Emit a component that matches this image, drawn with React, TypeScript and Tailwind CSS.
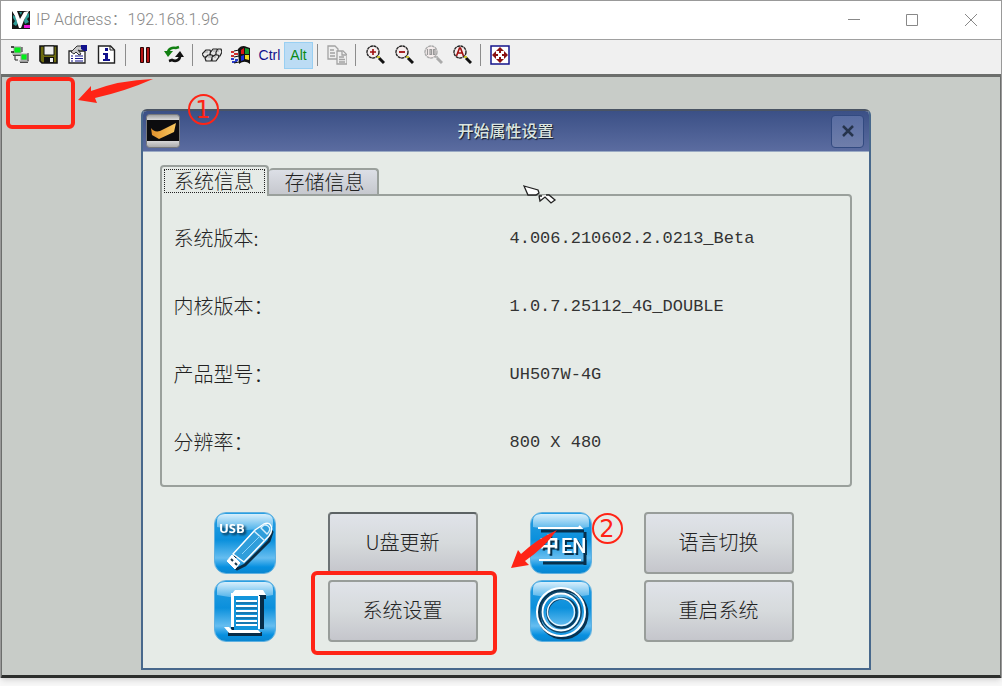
import React from 'react';

type IconProps = { children: React.ReactNode };

const ToolIcon = ({ children }: IconProps) => (
  <svg className="h-5 w-5" viewBox="0 0 20 20" fill="none" aria-hidden="true">
    {children}
  </svg>
);

interface ToolButtonProps {
  label: string;
  children: React.ReactNode;
  className?: string;
}

const ToolButton = ({ label, children, className = '' }: ToolButtonProps) => (
  <button
    type="button"
    aria-label={label}
    className={`flex h-[27px] w-[29px] shrink-0 items-center justify-center ${className}`}
  >
    {children}
  </button>
);

const Separator = () => (
  <div className="flex w-[9px] shrink-0 justify-center">
    <div className="h-[22px] w-px bg-[#8c8c8c]" />
  </div>
);

const ConnectIcon = () => (
  <ToolIcon>
    <path d="M4 2h7v6H4z" fill="#00f018" stroke="#999" />
    <path d="M1 2h3M1 7h3M3 10h8M10 17h8" stroke="#111" strokeWidth="1.4" />
    <path d="M2 9h9M9 16h10" stroke="#b5b5b5" strokeWidth="1.5" />
    <path d="M11 9h6v6h-6z" fill="#00f018" stroke="#999" />
    <path d="M5 11v4h3M18 8v8M12 2v5" stroke="#222" />
  </ToolIcon>
);

const SaveIcon = () => (
  <ToolIcon>
    <path d="M1 1h17v17H3l-2-2z" fill="#6e6c10" stroke="#111" strokeWidth="1.600" />
    <path d="M5 1h10v9H5z" fill="#efefef" stroke="#111" />
    <path d="M5 12h10v6H5z" fill="#111" />
    <path d="M11 13h3v4h-3z" fill="#eee" />
  </ToolIcon>
);

const PropertiesIcon = () => (
  <ToolIcon>
    <path d="M1 6h16v12H1z" fill="#fff" stroke="#222" strokeWidth="1.300" />
    <path d="M3 11h2M7 11h8M3 13.500h2M7 13.500h8M3 16h2M7 16h8" stroke="#15158a" strokeWidth="1.200" />
    <path d="M3 7l6-6 5 0 3 3-4 2-3-1 3 4-2 1-3-3-2 2z" fill="#c9c9c9" stroke="#333" />
    <path d="M13 0h6v6h-3l-3-2z" fill="#10108c" />
  </ToolIcon>
);

const InfoIcon = () => (
  <ToolIcon>
    <path d="M1.500 1h12l4 4v13h-16z" fill="#fff" stroke="#222" strokeWidth="1.400" />
    <path d="M13 1v4h4" stroke="#222" />
    <path d="M8 3h3v3H8zM6 8h5v6h2v2H6v-2h2v-4H6z" fill="#10108c" />
  </ToolIcon>
);

const PauseIcon = () => (
  <ToolIcon>
    <path d="M5.500 2.500h3v15h-3zM11.500 2.500h3v15h-3z" fill="#b81414" stroke="#2a0505" />
  </ToolIcon>
);

const RefreshIcon = () => (
  <ToolIcon>
    <path d="M4 8c0-4 4-6 8-5l3-1" stroke="#128012" strokeWidth="2.600" />
    <path d="M0 6h9l-5 6z" fill="#128012" />
    <path d="M16 11c0 4-4 6-8 4l-3 1" stroke="#111" strokeWidth="2.600" />
    <path d="M11 12l5-6 4 6z" fill="#111" />
  </ToolIcon>
);

const KeysIcon = () => (
  <ToolIcon>
    <g fill="#e6e6e6" stroke="#222" strokeWidth="1.200" strokeLinejoin="round">
      <path d="M0 9l4-4h4l1 3-3 4H2z" />
      <path d="M8 8l3-4h4l1 3-3 4H9z" />
      <path d="M14 7l2-3h3l1 3-2 4h-4z" />
      <path d="M3 13l3-3h4l1 2-2 4H4z" />
      <path d="M10 12l3-2h3l1 2-3 4h-4z" />
    </g>
    <path d="M3 7h3M11 6h3M15 6h2M6 12h3M12 12h2" stroke="#999" />
  </ToolIcon>
);

const WindowsIcon = () => (
  <ToolIcon>
    <path d="M7 4c4-4 6-3 9-2l3 1v16c-4-3-7-3-11 0z" fill="#111" />
    <path d="M10 5l3-2v6h-3z" fill="#d81414" />
    <path d="M14 3l4 1v5h-4z" fill="#12952c" />
    <path d="M10 11l3-1v5l-3 1z" fill="#1a2ed8" />
    <path d="M14 10h4v5l-4-1z" fill="#ecd820" />
    <path d="M0 7h3M3 9h4M0 11h3" stroke="#d03030" strokeWidth="2" />
    <path d="M0 14h3M4 15h3M1 17h5" stroke="#2b3dc8" strokeWidth="2" />
    <path d="M3 6l5-1M3 12l5-1M3 18l5-1" stroke="#111" />
  </ToolIcon>
);

const CopyIcon = () => (
  <ToolIcon>
    <g fill="#efefef" stroke="#a3a3a3" strokeWidth="1.300">
      <path d="M1 1h7l3 3v10H1z" />
      <path d="M3 5h4M3 8h5M3 11h5" />
      <path d="M10 6h6l4 4v9H10z" />
      <path d="M15 6v4h4M12 12h5M12 14.500h6M12 17h6" />
    </g>
  </ToolIcon>
);

interface ZoomIconProps {
  color?: string;
  handle?: string;
  children: React.ReactNode;
}

const ZoomIcon = ({ color = '#222', handle = '#111', children }: ZoomIconProps) => (
  <ToolIcon>
    <circle cx="8" cy="7" r="6" fill="#f6eeee" stroke={color} strokeWidth="1.400" strokeDasharray="3 .5" />
    <path d="M14 13l5 5" stroke={handle} strokeWidth="3" />
    <path d="M12 12l3 0" stroke={color === '#222' ? '#c8c000' : color} strokeWidth="1.500" />
    {children}
  </ToolIcon>
);

const FullscreenIcon = () => (
  <ToolIcon>
    <path d="M1 1h18v18H1z" fill="#fff" stroke="#14148c" strokeWidth="1.500" />
    <path
      d="M10 2l4 4h-3v2H9V6H6zM10 18l4-4h-3v-2H9v2H6zM2 10l4-4v3h2v2H6v3zM18 10l-4-4v3h-2v2h2v3z"
      fill="#8c1010"
    />
  </ToolIcon>
);

const AppLogo = () => (
  <svg className="h-[18px] w-[18px]" viewBox="0 0 18 18" aria-hidden="true">
    <path d="M0 0h18v18H0z" fill="#151515" />
    <path d="M1 4l3 2v3l2 3-2 3-3-2 2-3-2-3zM14 4l3-2v4l-2 2 2 3-4 2-1-3zM7 1h3l-1 3z" fill="#2c9a94" />
    <path d="M0 0h5l3 8 4-7 5-1-5 9-3 8H7L3 5z" fill="#fff" />
    <path d="M12 14h6v3h-6z" fill="#e815d8" />
  </svg>
);

const DialogLogo = () => (
  <svg className="h-[34px] w-[34px]" viewBox="0 0 34 34" aria-hidden="true">
    <defs>
      <linearGradient id="logoFrame" x1="0" y1="0" x2="0" y2="1">
        <stop offset="0" stopColor="#9a9c9e" />
        <stop offset=".2" stopColor="#e6e6e6" />
        <stop offset=".8" stopColor="#d8d8d8" />
        <stop offset="1" stopColor="#a8a8a8" />
      </linearGradient>
      <linearGradient id="logoMark" x1="0" y1="0" x2="1" y2="0">
        <stop offset="0" stopColor="#e0902c" />
        <stop offset="1" stopColor="#f8c860" />
      </linearGradient>
    </defs>
    <rect x=".5" y=".5" width="33" height="33" rx="3" fill="url(#logoFrame)" stroke="#77797c" />
    <path d="M1 6h32v21H1z" fill="#0c0c0e" />
    <path d="M5 14c2 3 5 4 9 3l16-8-2 9-15 7-7-4z" fill="url(#logoMark)" />
  </svg>
);

const Tile = ({ children }: { children: React.ReactNode }) => (
  <div className="h-[62px] w-[62px] overflow-hidden rounded-xl border border-[#5fb0e0]">
    <svg className="h-full w-full" viewBox="0 0 60 60" fill="none" aria-hidden="true">
      <defs>
        <linearGradient id="tileFill" x1="0" y1="0" x2="0" y2="1">
          <stop offset="0" stopColor="#2a9fe2" />
          <stop offset=".45" stopColor="#0b90dc" />
          <stop offset=".75" stopColor="#66bdf0" />
          <stop offset=".9" stopColor="#0790e0" />
          <stop offset="1" stopColor="#0a86d0" />
        </linearGradient>
        <linearGradient id="tileGloss" x1="0" y1="0" x2="0" y2="1">
          <stop offset="0" stopColor="#d8effc" />
          <stop offset="1" stopColor="#4eb2ea" />
        </linearGradient>
      </defs>
      <path d="M0 0h60v60H0z" fill="url(#tileFill)" />
      <path d="M2 8Q2 1 10 1h40q8 0 8 7v6Q30 20 2 14z" fill="url(#tileGloss)" />
      {children}
    </svg>
  </div>
);

const UsbTile = () => (
  <Tile>
    <g strokeLinejoin="round">
      <path d="M20 44l22-25 10-5 5 5-3 9-24 24-8 4-8-8z" stroke="#0a2c44" strokeWidth="3" />
      <path d="M18 41l22-24 9-6q5-2 7 2t-2 10L29 49z" fill="#2f9edb" stroke="#fff" strokeWidth="1.500" />
      <path d="M39 18l11 10M46 15q3-5 7-2t-1 8z" stroke="#d4eefc" strokeWidth="1.500" />
      <path d="M27 41l18-18" stroke="#8cd2f8" />
      <path d="M17 42l8 8-5 6-8-8z" fill="#fff" stroke="#fff" />
      <path d="M16 46l2 2M20 50l2 2" stroke="#16374a" strokeWidth="2" />
    </g>
    <text
      x="4"
      y="20"
      fill="#fff"
      className="font-['Open_Sans',sans-serif] text-[13px] font-bold drop-shadow-[2px_2px_1px_#06304c]"
    >
      USB
    </text>
  </Tile>
);

const ScrollTile = () => (
  <Tile>
    <path d="M18 14v35M47 17v31M13 53h34M20 16h31" stroke="#062c48" strokeWidth="4" />
    <path d="M19 14h24v35H19z" fill="#1295dc" />
    <path d="M16 12h28v3H19v31h-3zM43 15h2v33h-2z" fill="#fff" />
    <path d="M20 9h28l3 5H16zM9 46h5l3 3h26l3 3H14z" fill="#fff" />
    <path d="M21 20h21M21 25h21M21 30h21M21 35h21M21 40h21M21 44h21" stroke="#fff" strokeWidth="1.800" />
    <path d="M21 22h21M21 27h21M21 32h21M21 37h21M21 42h21" stroke="#1a5e8a" />
  </Tile>
);

const LanguageTile = () => (
  <Tile>
    <path d="M10 18h43M12 50h41M54 19v33" stroke="#07304c" strokeWidth="3" />
    <path d="M7 15h43l-2-2M8 47h42" stroke="#fff" strokeWidth="2" />
    <g fill="#fff" className="drop-shadow-[2px_2px_0_#06304c]">
      <text x="8" y="39" className="font-['Noto_Sans_CJK_SC',sans-serif] text-xl font-bold">中</text>
      <text x="30" y="40" className="font-['Roboto',sans-serif] text-xl font-medium">EN</text>
    </g>
  </Tile>
);

const RingTile = () => (
  <Tile>
    <circle cx="32" cy="33" r="24" stroke="#073352" strokeWidth="3" />
    <circle cx="30" cy="31" r="24" stroke="#fff" strokeWidth="2" />
    <circle cx="30" cy="31" r="20" stroke="#0e4b72" strokeWidth="2" />
    <circle cx="30" cy="31" r="18.500" stroke="#fff" strokeWidth="1.800" />
    <circle cx="31" cy="32" r="14.500" stroke="#073c60" strokeWidth="2.500" />
    <circle cx="30" cy="31" r="13.500" stroke="#e4f5ff" strokeWidth="1.500" />
  </Tile>
);

interface ActionButtonProps {
  label: string;
  focused?: boolean;
}

const ActionButton = ({ label, focused = false }: ActionButtonProps) => (
  <button
    type="button"
    className={`h-[62px] w-[150px] rounded-sm border-2 bg-linear-to-b from-[#e0e3e9] via-[#d6dadc] to-[#c5c6cc] pb-[2px] ${
      focused ? 'border-[#8b908e] border-t-[#5c6264] border-l-[#6c7274]' : 'border-[#989d9a]'
    }`}
  >
    {label}
  </button>
);

const systemInfo = [
  { label: '系统版本:', value: '4.006.210602.2.0213_Beta' },
  { label: '内核版本：', value: '1.0.7.25112_4G_DOUBLE' },
  { label: '产品型号：', value: 'UH507W-4G' },
  { label: '分辨率：', value: '800 X 480' },
];

const TitleBar = () => (
  <header className="flex h-[38px] items-center bg-white pl-[11px]">
    <AppLogo />
    <h1 className="ml-[6px] flex-1 font-['Roboto','Noto_Sans_CJK_SC',sans-serif] text-base font-light text-[#888]">
      IP Address：192.168.1.96
    </h1>
    <button type="button" aria-label="Minimize" className="flex h-full w-[58px] items-center justify-center">
      <svg className="h-3 w-3" viewBox="0 0 12 12" stroke="#888" fill="none"><path d="M0 5.500h12" /></svg>
    </button>
    <button type="button" aria-label="Maximize" className="flex h-full w-[58px] items-center justify-center">
      <svg className="h-3 w-3" viewBox="0 0 12 12" stroke="#888" fill="none"><path d="M.5.500h11v11H.5z" /></svg>
    </button>
    <button type="button" aria-label="Close" className="flex h-full w-[60px] items-center justify-center">
      <svg className="h-3 w-3" viewBox="0 0 12 12" stroke="#888" fill="none"><path d="M0 0l12 12M12 0L0 12" /></svg>
    </button>
  </header>
);

const Toolbar = () => (
  <div
    role="toolbar"
    className="flex h-[35px] items-center border-t border-[#a0a0a0] bg-[#f0f0f0] pb-1 pl-1 font-['Liberation_Sans',sans-serif] text-sm"
  >
    <ToolButton label="Connect"><ConnectIcon /></ToolButton>
    <ToolButton label="Save"><SaveIcon /></ToolButton>
    <ToolButton label="Properties"><PropertiesIcon /></ToolButton>
    <ToolButton label="Info"><InfoIcon /></ToolButton>
    <Separator />
    <ToolButton label="Pause"><PauseIcon /></ToolButton>
    <ToolButton label="Refresh"><RefreshIcon /></ToolButton>
    <Separator />
    <ToolButton label="Send keys"><KeysIcon /></ToolButton>
    <ToolButton label="Start menu"><WindowsIcon /></ToolButton>
    <ToolButton label="Ctrl" className="text-[#10108c]">Ctrl</ToolButton>
    <ToolButton label="Alt" className="border border-[#99cff2] bg-[#bcdcf4] text-[#0a8a14]">Alt</ToolButton>
    <Separator />
    <ToolButton label="Copy"><CopyIcon /></ToolButton>
    <Separator />
    <ToolButton label="Zoom in">
      <ZoomIcon><path d="M5 7h6M8 4v6" stroke="#a01010" strokeWidth="1.600" /></ZoomIcon>
    </ToolButton>
    <ToolButton label="Zoom out">
      <ZoomIcon><path d="M5 7h6" stroke="#a01010" strokeWidth="1.800" /></ZoomIcon>
    </ToolButton>
    <ToolButton label="Zoom 100%">
      <ZoomIcon color="#aaa" handle="#aaa">
        <path d="M4.500 4v6M7 4.500h1.500v5H7zM10.500 4.500H12v5h-1.500z" stroke="#999" strokeWidth="1.200" />
      </ZoomIcon>
    </ToolButton>
    <ToolButton label="Auto zoom">
      <ZoomIcon><path d="M4.500 11l3-8h1l3 8M6 8h4" stroke="#a01010" strokeWidth="1.600" /></ZoomIcon>
    </ToolButton>
    <Separator />
    <ToolButton label="Full screen"><FullscreenIcon /></ToolButton>
  </div>
);

interface StepMarkProps {
  value: string;
  className: string;
}

const StepMark = ({ value, className }: StepMarkProps) => (
  <span
    className={`absolute flex h-[31px] w-[31px] items-center justify-center rounded-full border-2 border-[#ff2416] font-['DejaVu_Sans',sans-serif] text-2xl leading-none font-normal text-[#ff2416] ${className}`}
  >
    {value}
  </span>
);

const SettingsDialog = () => (
  <section
    role="dialog"
    aria-labelledby="dialog-title"
    className="relative mt-8 w-full max-w-[730px] shrink-0 self-start rounded-t-md border-2 border-[#48688c] border-t-[#4a5464] bg-[#e6ebe7] pb-[26px]"
  >
    <header className="flex h-[41px] items-center justify-between rounded-t-sm border-b border-[#9aaac4] bg-linear-to-b from-[#3b5086] to-[#5b6ca0] pr-1 pl-[3px]">
      <DialogLogo />
      <h2
        id="dialog-title"
        className="pb-[3px] font-['Noto_Sans_CJK_SC',sans-serif] text-base font-medium text-[#dce6e0] text-shadow-[1px_1px_1px_#101828]"
      >
        开始属性设置
      </h2>
      <button
        type="button"
        aria-label="关闭"
        className="flex h-[33px] w-[33px] items-center justify-center rounded-sm border border-[#324a80] bg-linear-to-b from-[#596da2] to-[#6f7eaa]"
      >
        <svg className="h-3 w-3" viewBox="0 0 12 12" stroke="#26344c" strokeWidth="2.500"><path d="M1 1l10 10M11 1L1 11" /></svg>
      </button>
    </header>

    <div className="px-[17px] pt-[13px]">
      <div role="tablist" className="flex items-end">
        <button
          type="button"
          role="tab"
          aria-selected="true"
          className="relative z-10 -mb-[2px] h-[31px] w-[109px] rounded-t-sm border-2 border-b-0 border-[#9aa09c] bg-[#e6ebe7] px-[2px] pb-[2px]"
        >
          <span className="block h-6 border border-dotted border-[#222] leading-[22px]">系统信息</span>
        </button>
        <button
          type="button"
          role="tab"
          aria-selected="false"
          className="h-[26px] w-[110px] rounded-t-sm border-2 border-b-0 border-l-0 border-[#9aa09c] bg-linear-to-b from-[#dcdfe6] to-[#c6c8ce] pl-1 leading-5"
        >
          存储信息
        </button>
      </div>
      <div role="tabpanel" className="rounded-b-sm rounded-tr-sm border-2 border-[#9aa09c] pt-2 pb-[9px] pl-3">
        <table className="w-full">
          <tbody>
            {systemInfo.map((row) => (
              <tr key={row.label} className="h-[68px]">
                <th scope="row" className="w-[336px] text-left font-light">{row.label}</th>
                <td className="pt-[2px] font-['Liberation_Mono',monospace] text-[17px] text-[#333]">{row.value}</td>
              </tr>
            ))}
          </tbody>
        </table>
      </div>

      <div className="mt-[25px] flex justify-center pr-1">
        <div className="grid grid-cols-[62px_150px_62px_150px] gap-x-[52px] gap-y-[6px]">
          <UsbTile />
          <ActionButton label="U盘更新" focused />
          <LanguageTile />
          <ActionButton label="语言切换" />
          <ScrollTile />
          <ActionButton label="系统设置" />
          <RingTile />
          <ActionButton label="重启系统" />
        </div>
      </div>
    </div>

    {/* Remote mouse pointer */}
    <svg className="absolute top-[73px] left-[380px] h-[22px] w-[34px]" viewBox="0 0 34 22" aria-hidden="true">
      <path d="M1 2l14 4 1 3-3 2H5z" fill="#fff" stroke="#222" strokeWidth="1.300" />
      <path d="M16 12l1 5 5-4 6 6 4-3-6-5h-3M16 12h3" fill="#fff" stroke="#222" strokeWidth="1.300" />
    </svg>

    {/* Step 1 */}
    <StepMark value="1" className="-top-[17px] left-[45px]" />

    {/* Step 2 */}
    <div className="absolute top-[460px] left-[168px] h-[84px] w-[186px] rounded-md border-4 border-[#ff2416]" />
    <svg className="absolute top-[418px] left-[368px] h-[42px] w-[48px]" viewBox="0 0 48 42" aria-hidden="true">
      <path d="M0 39L7 21l3 4Q26 10 46 1 33 19 14 32l4 4z" fill="#ff2416" />
    </svg>
    <StepMark value="2" className="top-[402px] left-[449px]" />
  </section>
);

export default function App() {
  return (
    <div className="flex min-h-screen flex-col bg-[#f8f8f8] pb-[9px]">
      <div className="flex flex-1 flex-col border border-b-0 border-[#999] shadow-md">
        <TitleBar />
        <Toolbar />
        <main className="relative flex flex-1 justify-center border-t-3 border-r border-b-3 border-l border-[#6c6e6c] border-b-[#2c2e2c] bg-[#c8ccc8] pb-[5px] pl-[9px] font-['Noto_Sans_CJK_SC',sans-serif] text-xl font-light text-[#222]">
          <SettingsDialog />

          {/* Step 1 */}
          <div className="absolute top-0 left-1 h-[52px] w-[69px] rounded-md border-4 border-[#ff2416]" />
          <svg className="absolute top-[1px] left-[76px] h-[26px] w-[76px]" viewBox="0 0 76 26" aria-hidden="true">
            <path d="M0 22L13 8v5Q42 2 75 1 48 13 17 20l2 5z" fill="#ff2416" />
          </svg>
        </main>
      </div>
    </div>
  );
}
